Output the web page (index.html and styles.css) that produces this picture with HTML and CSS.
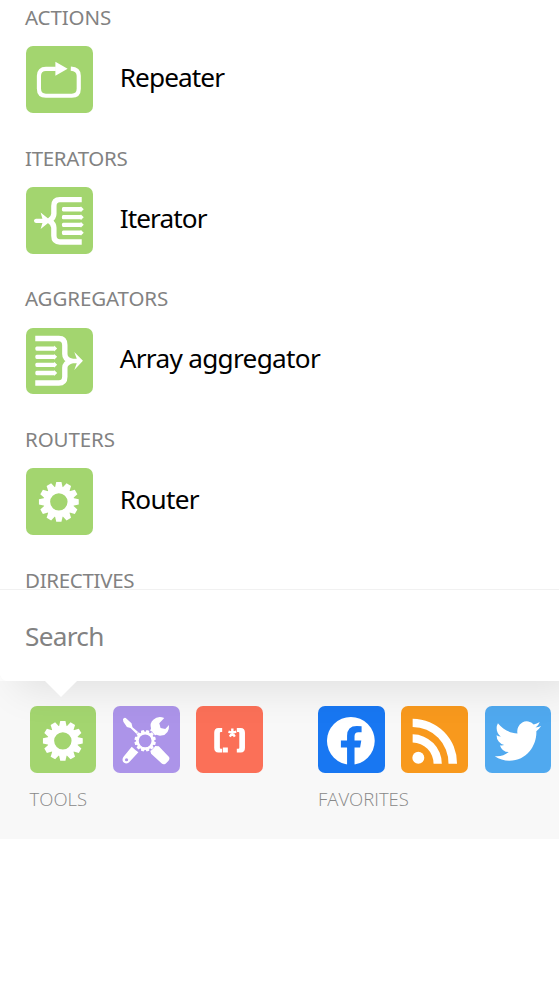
FILE: index.html
```html
<!DOCTYPE html>
<html lang="en">
<head>
<meta charset="utf-8">
<title>Tools</title>
<link rel="stylesheet" href="styles.css">
</head>
<body>
<svg class="defs" aria-hidden="true">
  <defs>
    <g id="teeth">
      <path id="tooth" d="M-4.2-13 L-2.6-20 H2.6 L4.2-13Z"/>
      <use href="#tooth" transform="rotate(30)"/><use href="#tooth" transform="rotate(60)"/>
      <use href="#tooth" transform="rotate(90)"/><use href="#tooth" transform="rotate(120)"/>
      <use href="#tooth" transform="rotate(150)"/><use href="#tooth" transform="rotate(180)"/>
      <use href="#tooth" transform="rotate(210)"/><use href="#tooth" transform="rotate(240)"/>
      <use href="#tooth" transform="rotate(270)"/><use href="#tooth" transform="rotate(300)"/>
      <use href="#tooth" transform="rotate(330)"/>
    </g>
    <g id="gear"><circle r="12" fill="none" stroke="#fff" stroke-width="6.5"/><use href="#teeth"/></g>
    <path id="row" d="M1.5-2.2 H19 V-3 L22 0 L19 3 V2.2 H1.5 Q0 2.2 0 0 Q0-2.2 1.5-2.2Z"/>
  </defs>
</svg>
<div class="popup">
  <div class="list">
    <section class="group">
      <h2 class="category">ACTIONS</h2>
      <div class="item">
        <svg class="icon green" viewBox="0 0 67 67"><path class="line" d="M30 23H20Q13 23 13 30V43Q13 50 20 50H46Q53 50 53 43V30Q53 23 45 22.7" stroke-width="4.2"/><path d="M29.5 15.8 41.8 22.8 29.5 30Z"/></svg>
        <span class="name tight">Repeater</span>
      </div>
    </section>
    <section class="group">
      <h2 class="category snug">ITERATORS</h2>
      <div class="item">
        <svg class="icon green" viewBox="0 0 67 67"><path class="line" d="M56 12.7H34Q28 12.7 28 19V27Q28 31 23.5 34Q28 37 28 41V49Q28 55.2 34 55.2H56" stroke-width="5.4"/><path d="M10 31.8H16.5L14.7 25.7 25 34 14.7 42.3 16.5 36.2H10Q8 36 8 34 8 32 10 31.8Z"/><use href="#row" x="36" y="22.3"/><use href="#row" x="36" y="30.3"/><use href="#row" x="36" y="38"/><use href="#row" x="36" y="46"/></svg>
        <span class="name tight">Iterator</span>
      </div>
    </section>
    <section class="group">
      <h2 class="category">AGGREGATORS</h2>
      <div class="item">
        <svg class="icon green" viewBox="0 0 67 67"><path class="line" d="M9.3 10.5H33Q39 10.5 39 17V26Q39 31 45 33.2Q39 35.5 39 40V49Q39 55.3 33 55.3H9.3" stroke-width="5.4"/><path d="M42 30.8H51L48.5 24 57.2 33 48.5 42.3 51 35.4H42Z"/><use href="#row" x="9.3" y="20.7"/><use href="#row" x="9.3" y="29"/><use href="#row" x="9.3" y="37"/><use href="#row" x="9.3" y="45.2"/></svg>
        <span class="name">Array aggregator</span>
      </div>
    </section>
    <section class="group">
      <h2 class="category">ROUTERS</h2>
      <div class="item">
        <svg class="icon green" viewBox="0 0 67 67"><use href="#gear" x="33" y="34"/></svg>
        <span class="name">Router</span>
      </div>
    </section>
    <section class="group last">
      <h2 class="category snug">DIRECTIVES</h2>
    </section>
  </div>
  <div class="search">Search</div>
  <svg class="pointer" viewBox="0 0 32 16"><path d="M0 0H32L16 16Z"/></svg>
</div>
<footer class="dock">
  <div class="dock-group">
    <div class="icons">
      <svg class="icon green" viewBox="0 0 67 67"><use href="#gear" x="33" y="35"/></svg>
      <svg class="icon purple" viewBox="0 0 67 67">
        <path d="M10 13.5Q10.5 11.5 12.8 12L18.6 17.3 19.6 21.3 26.8 27.3 25 29.3 17.6 22.2 14 21 10.4 15.7Z"/>
        <path d="M51.5 12 46.5 17.3 47.8 22 52.5 23 56.3 19Q56.8 28.5 48.5 29.7Q45.5 30 43.5 29L40.5 30.5 36.5 26.5 38.2 22.5Q36.7 17 40.5 13.8Q45 9.5 51.5 12Z"/>
        <path d="M18.8 41Q22 44 25.5 46.5L16 56.8Q12.5 59 10.3 56.3Q8.6 53.5 10.8 50.8Z"/>
        <path d="M37.3 44.5 42 40.2 46 40.5 56.3 51.3Q57.3 53 55.8 55L52.8 58Q50.5 59.3 49 57.8L38.3 48Z"/>
        <circle class="purple" cx="13.6" cy="54" r="1.6"/>
        <circle class="purple" cx="32.3" cy="35" r="11.3"/>
        <use href="#teeth" transform="translate(32.3 35) rotate(15) scale(.54)"/><circle class="line" cx="32.3" cy="35" r="7.8" stroke-width="2.7"/>
      </svg>
      <svg class="icon coral" viewBox="0 0 67 67"><path d="M26.3 22.2V26H25Q24 26 24 27V42Q24 43 25 43H26.3V46.7H22.5Q18.3 46.7 18.3 42V27Q18.3 22.2 22.5 22.2ZM41 22.2V26H42.5Q43.5 26 43.5 27V42Q43.5 43 42.5 43H41V46.7H45Q49.2 46.7 49.2 42V27Q49.2 22.2 45 22.2Z"/><rect x="27" y="41.7" width="5" height="5"/><path class="line" d="M36.5 22.7V27M32.6 25.8 36.5 27.1 34 30.7M40.4 25.8 36.5 27.1 39 30.7" stroke-width="2.4"/></svg>
    </div>
    <div class="caption">TOOLS</div>
  </div>
  <div class="dock-group">
    <div class="icons">
      <svg class="icon blue" viewBox="0 0 67 67"><circle cx="33" cy="35" r="24"/><path class="blue" d="M29.2 60V41.7H23V34.6H29.2V30Q29.2 20 39 20Q41.5 20 43.8 20.4V26.3H40.5Q36.7 26.3 36.7 30.5V34.6H43.5L42.3 41.7H36.7V60Z"/></svg>
      <svg class="icon orange" viewBox="0 0 67 67"><circle cx="17.4" cy="52" r="6"/><path d="M11.7 28.5A29.4 29.4 0 0 1 41 58H32.7A21.2 21.2 0 0 0 11.7 36.7ZM11.7 12.8A44.8 44.8 0 0 1 56.3 58H47.7A36.4 36.4 0 0 0 11.7 21Z"/></svg>
      <svg class="icon sky" viewBox="0 0 67 67"><path transform="translate(9.8 10.8) scale(1.94 2.03)" d="M23.953 4.57a10 10 0 01-2.825.775 4.958 4.958 0 002.163-2.723c-.951.555-2.005.959-3.127 1.184a4.92 4.92 0 00-8.384 4.482C7.69 8.095 4.067 6.13 1.64 3.162a4.822 4.822 0 00-.666 2.475c0 1.71.87 3.213 2.188 4.096a4.904 4.904 0 01-2.228-.616v.06a4.923 4.923 0 003.946 4.827 4.996 4.996 0 01-2.212.085 4.936 4.936 0 004.604 3.417 9.867 9.867 0 01-6.102 2.105c-.39 0-.779-.023-1.17-.067a13.995 13.995 0 007.557 2.209c9.053 0 13.998-7.496 13.998-13.985 0-.21 0-.42-.015-.63A9.935 9.935 0 0024 4.59z"/></svg>
    </div>
    <div class="caption">FAVORITES</div>
  </div>
</footer>
</body>
</html>
```
FILE: styles.css
```css
* { box-sizing: border-box; }
body {
  margin: 0;
  height: 1004px;
  overflow: hidden;
  background: #fff;
  font-family: "Noto Sans", "Open Sans", sans-serif;
}
.defs { position: absolute; width: 0; height: 0; }
.popup {
  position: relative;
  z-index: 1;
  height: 681px;
  background: #fff;
  border-radius: 0 0 0 8px;
  box-shadow: 16px 7px 40px rgba(0, 0, 0, .1);
}
.list { height: 589px; }
.group { height: 140.7px; padding: 3px 0 0 25px; }
.group.last { height: 26px; }
.category {
  margin: 0;
  height: 43px;
  font-size: 20.5px;
  font-weight: 400;
  line-height: 29px;
  letter-spacing: -.1px;
  color: #828282;
  white-space: nowrap;
}
.category.snug { letter-spacing: -.3px; }
.item { display: flex; align-items: center; gap: 27px; height: 67px; padding-left: 1px; }
.name {
  margin-top: -5px;
  font-size: 26.2px;
  line-height: 40px;
  letter-spacing: -.7px;
  color: #000;
  white-space: nowrap;
}
.name.tight { letter-spacing: -.9px; }
.icon { display: block; flex: none; width: 66.7px; height: 66.7px; border-radius: 7px; fill: #fff; }
.line { fill: none; stroke: #fff; }
.green { background: #a3d56f; }
.purple { background: #ac94e9; fill: #ac94e9; }
svg.purple { fill: #fff; }
.coral { background: #fb7058; }
.blue { background: #1877f2; fill: #1877f2; }
svg.blue { fill: #fff; }
.orange { background: #f8991d; }
.sky { background: #50a9ef; }
.search {
  position: relative;
  height: 92px;
  padding: 27px 0 0 25px;
  background: #fff;
  border-top: 1px solid #f1f1f1;
  border-radius: 0 0 0 8px;
  font-size: 26.2px;
  line-height: 38px;
  letter-spacing: -.7px;
  color: #828282;
}
.pointer { position: absolute; left: 45px; top: 680.5px; width: 32px; height: 16px; fill: #fff; }
.dock {
  display: flex;
  gap: 55px;
  height: 158px;
  padding: 25px 0 0 29.6px;
  background: #f8f8f8;
}
.icons { display: flex; gap: 16.7px; }
.caption { margin-top: 12px; font-family: "Open Sans", sans-serif; font-size: 18.5px; font-weight: 300; line-height: 28px; color: #888; }
```
